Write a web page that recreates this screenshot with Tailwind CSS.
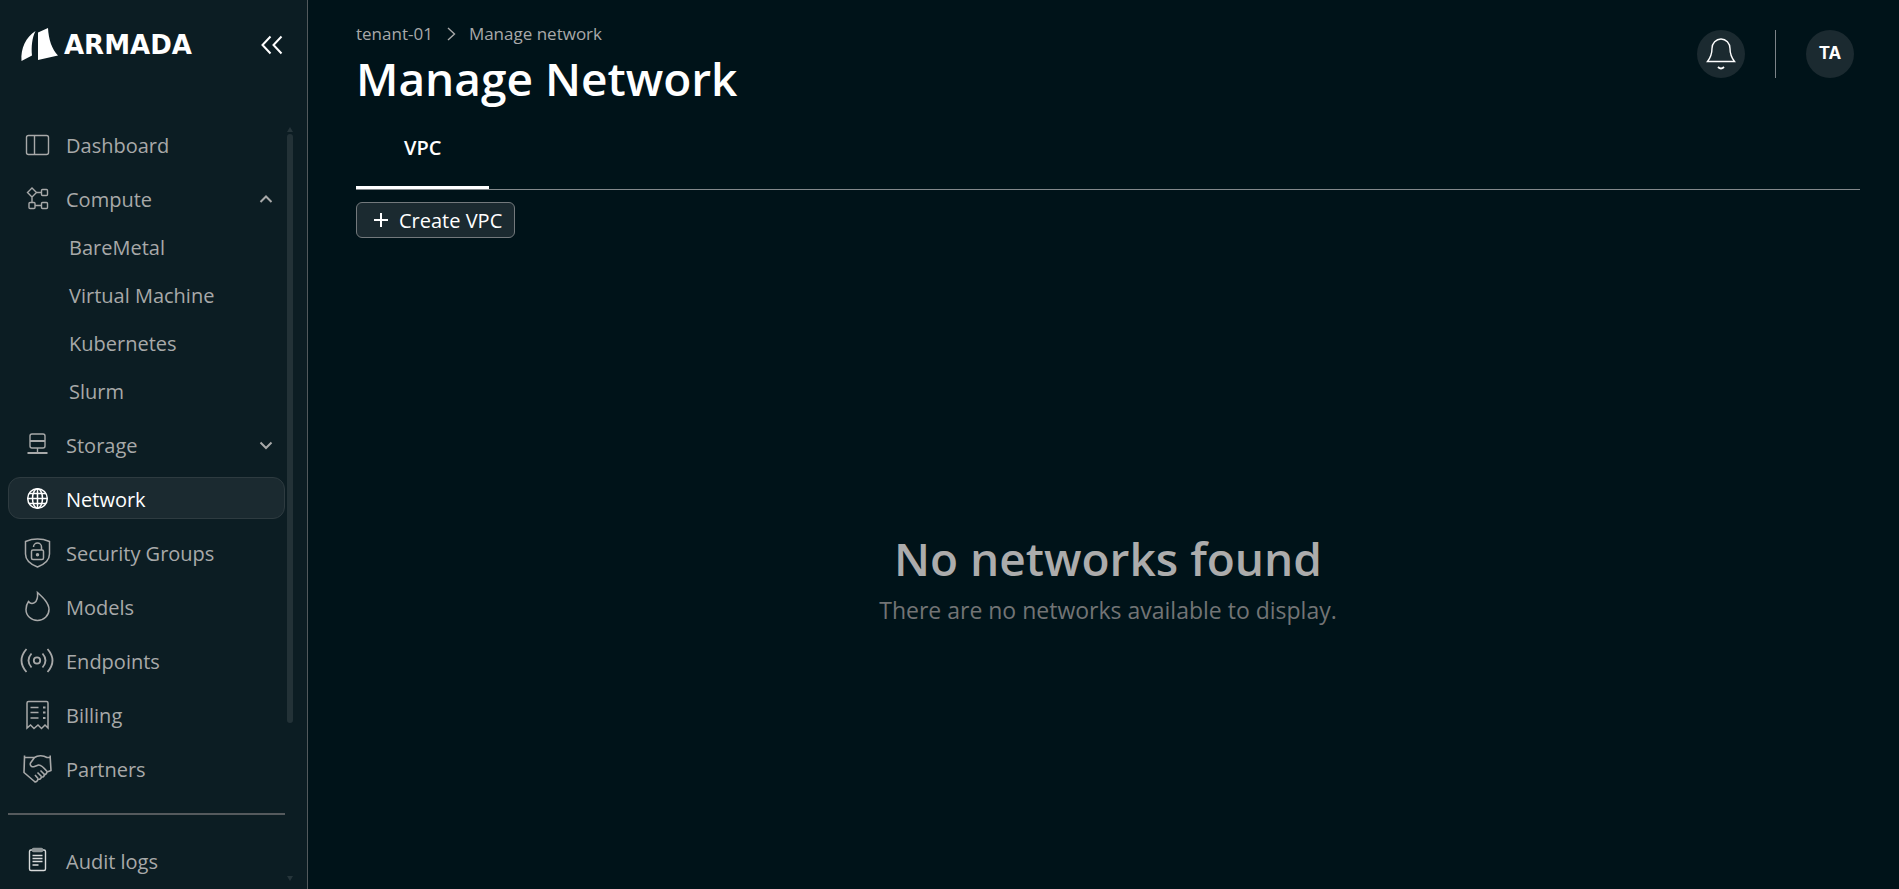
<!DOCTYPE html>
<html lang="en">
<head>
    <meta charset="UTF-8">
    <meta name="viewport" content="width=device-width, initial-scale=1.0">
    <title>Manage Network</title>
    <script src="https://cdn.jsdelivr.net/npm/@tailwindcss/browser@4"></script>
</head>
<body class="flex h-screen overflow-hidden bg-[#001319] font-['Segoe_UI','Open_Sans',sans-serif] text-white">

    <!-- Sidebar -->
    <aside class="relative flex h-full w-[308px] shrink-0 flex-col border-r border-[#52595c] bg-[#0c1d23]">
        <div class="flex items-center justify-between pt-7 pr-[23px] pl-5">
            <a href="#" class="flex items-center gap-1" aria-label="Armada home">
                <svg class="h-[34px] w-10" viewBox="0 0 40 34" fill="#fff">
                    <path d="M15.500 3C6 9 .5 20 1.500 33L12 27.500C11.200 19 12 10 15.500 3Z"/>
                    <path d="M18 4.500L28 0C28.500 11 32 21.500 38 27.500L18 32Z"/>
                </svg>
                <span class="font-['DejaVu_Sans'] text-[26px] leading-4 font-bold">ARMADA</span>
            </a>
            <button type="button" aria-label="Collapse sidebar">
                <svg class="size-6" viewBox="0 0 24 24" fill="none" stroke="#fff" stroke-width="2">
                    <path d="M10.500 3.500L2.500 12l8 8.500M21.500 3.500L13.500 12l8 8.500"/>
                </svg>
            </button>
        </div>

        <nav class="mt-[61px] flex flex-col gap-3 pr-[22px] pl-2 text-xl leading-7 text-[#a8a9a9]">
            <a href="#" class="flex h-[42px] items-center gap-3 rounded-xl px-3">
                <svg class="size-[34px]" viewBox="0 0 34 34" fill="none" stroke="currentColor" stroke-width="1.4">
                    <rect x="6.500" y="8.500" width="22" height="19" rx="2"/><path d="M14.500 8.500v19"/>
                </svg>
                <span class="pt-1">Dashboard</span>
            </a>
            <div class="flex flex-col gap-[6px]">
                <button type="button" class="flex h-[42px] items-center gap-3 rounded-xl px-3 text-left" aria-expanded="true">
                    <svg class="size-[34px]" viewBox="0 0 34 34" fill="none" stroke="currentColor" stroke-width="1.4">
                        <path d="M12 7l4.500 4.500L12 16l-4.500-4.500zM16.500 11.500h5M12 16v5.500M15 24.500h6.500"/>
                        <rect x="21.500" y="8.500" width="6" height="6" rx="1"/><rect x="9" y="21.500" width="6" height="6" rx="1"/><rect x="21.500" y="21.500" width="6" height="6" rx="1"/>
                    </svg>
                    <span class="flex-1 pt-1">Compute</span>
                    <svg class="size-4" viewBox="0 0 16 16" fill="none" stroke="currentColor" stroke-width="2"><path d="M3.500 12L9 6.500l5.500 5.500"/></svg>
                </button>
                <a href="#" class="flex h-[42px] items-center pt-1 pl-[61px]">BareMetal</a>
                <a href="#" class="flex h-[42px] items-center pt-1 pl-[61px]">Virtual Machine</a>
                <a href="#" class="flex h-[42px] items-center pt-1 pl-[61px]">Kubernetes</a>
                <a href="#" class="flex h-[42px] items-center pt-1 pl-[61px]">Slurm</a>
            </div>
            <button type="button" class="flex h-[42px] items-center gap-3 rounded-xl px-3 text-left" aria-expanded="false">
                <svg class="size-[34px]" viewBox="0 0 34 34" fill="none" stroke="currentColor" stroke-width="1.4">
                    <rect x="10" y="7" width="15" height="14" rx="2"/><path d="M17.500 21v6"/><path d="M10 14h15M7.500 26h20" stroke-width="1.800"/>
                </svg>
                <span class="flex-1 pt-1">Storage</span>
                <svg class="size-4" viewBox="0 0 16 16" fill="none" stroke="currentColor" stroke-width="2"><path d="M3.500 6.500L9 12l5.500-5.500"/></svg>
            </button>
            <a href="#" class="flex h-[42px] items-center gap-3 rounded-xl border border-[#2e3b40] bg-[#1b2a30] px-[11px] text-white" aria-current="page">
                <svg class="size-[34px]" viewBox="0 0 34 34" fill="none" stroke="currentColor" stroke-width="1.5">
                    <circle cx="17.500" cy="17.500" r="9.800"/><ellipse cx="17.500" cy="17.500" rx="5" ry="9.800"/>
                    <path d="M17.500 7.500v20M7.500 17.500h20M9 12.500h17M9 22.500h17"/>
                </svg>
                <span class="pt-1">Network</span>
            </a>
            <a href="#" class="flex h-[42px] items-center gap-3 rounded-xl px-3">
                <svg class="size-[34px]" viewBox="0 0 34 34" fill="none" stroke="currentColor" stroke-width="1.5">
                    <path d="M5.500 6.500C13 3.500 22 3.500 29.500 6.500V19c0 6-5.500 10.500-12 13-6.500-2.500-12-7-12-13z"/>
                    <rect x="11.500" y="15" width="12" height="9.500" rx="1.500"/><path d="M21.500 15v-3a4 4 0 0 0-8 0"/>
                    <circle cx="17.500" cy="19.800" r="1" fill="currentColor"/>
                </svg>
                <span class="pt-1">Security Groups</span>
            </a>
            <a href="#" class="flex h-[42px] items-center gap-3 rounded-xl px-3">
                <svg class="size-[34px]" viewBox="0 0 34 34" fill="none" stroke="currentColor" stroke-width="1.5">
                    <path d="M17.500 3.500C23 8.500 29 14 29 20.500a11.500 11 0 0 1-23 0C6 17 7 14.500 8.500 12.500c1.500 2 4 2.500 6 1.200C17 12 18 8.500 17.500 3.500z"/>
                </svg>
                <span class="pt-1">Models</span>
            </a>
            <a href="#" class="flex h-[42px] items-center gap-3 rounded-xl px-3">
                <svg class="size-[34px]" viewBox="0 0 34 34" fill="none" stroke="currentColor" stroke-width="1.8">
                    <circle cx="17" cy="17.500" r="3.200"/>
                    <path d="M11.500 10.500q-6 7 0 14M22.500 10.500q6 7 0 14M6.500 6q-10 11.500 0 23M27.500 6q10 11.500 0 23"/>
                </svg>
                <span class="pt-1">Endpoints</span>
            </a>
            <a href="#" class="flex h-[42px] items-center gap-3 rounded-xl px-3">
                <svg class="size-[34px]" viewBox="0 0 34 34" fill="none" stroke="currentColor" stroke-width="1.5">
                    <path d="M7 31V6q0-1.500 1.500-1.500h18Q28 4.500 28 6v25l-3-3-3.500 3.500L18 28l-4 3.500L10.500 28z"/>
                    <path d="M10.500 10.500h8M10.500 15.500h8M10.500 21h8"/><path d="M23 10.500h2.500M23 15.500h2.500M23 21h2.500" stroke-width="2.200"/>
                </svg>
                <span class="pt-1">Billing</span>
            </a>
            <a href="#" class="flex h-[42px] items-center gap-3 rounded-xl px-3">
                <svg class="size-[34px]" viewBox="0 0 34 34" fill="none" stroke="currentColor" stroke-width="1.6" stroke-linejoin="round">
                    <path d="M4.500 4.500v2L4 21.500 14.500 30.500q1.500 1 3-1l.5-1.500q2.500 1 3.500-2 2.500.5 3-2.500 2 0 2.500-2.500l4-1.500-.8-13v-2"/>
                    <path d="M4.500 6.500H15M31 6.500h-4C23 4 17.500 4.500 14.500 6.500L10.500 12c-1 2.500 1.500 4.500 4 3.500l4-1.500c3-.5 6.500 4 8.500 6.500M20.500 19.500l4 4M17.500 21.500l4 4M15 24l3 3.500"/>
                </svg>
                <span class="pt-1">Partners</span>
            </a>
            <hr class="my-3 border-t-2 border-[#555a5d]">
            <a href="#" class="flex h-[42px] items-center gap-3 rounded-xl px-3">
                <svg class="size-[34px]" viewBox="0 0 34 34" fill="none" stroke="#d8dada" stroke-width="1.4">
                    <rect x="9.500" y="7" width="16" height="20.500" rx="1.500"/>
                    <path d="M12.500 12.500h10M12.500 15.500h10M12.500 18.500h10M12.500 22h6"/>
                    <rect x="12.500" y="5.500" width="10" height="3" rx="1" fill="#8f9698" stroke="#8f9698"/>
                </svg>
                <span class="pt-1">Audit logs</span>
            </a>
        </nav>

        <!-- Scrollbar -->
        <div class="absolute top-[127px] right-[14px] bottom-[7px] flex w-[6px] flex-col">
            <svg class="h-[7px] w-[6px]" viewBox="0 0 6 7" fill="#26353a"><path d="M3 0l3 5H0z"/></svg>
            <div class="h-[589px] rounded-full bg-[#233237]"></div>
            <svg class="mt-auto h-[6px] w-[6px]" viewBox="0 0 6 6" fill="#26353a"><path d="M3 5L0 0h6z"/></svg>
        </div>
    </aside>

    <!-- Content -->
    <main class="flex min-w-0 flex-1 flex-col pr-[39px] pl-12">
        <header class="flex items-start justify-between">
            <div class="pt-[22px]">
                <div class="flex items-center gap-3 text-[17px] leading-6 text-[#a8a9a9]">
                    <a href="#">tenant-01</a>
                    <svg class="h-4 w-3" viewBox="0 0 12 16" fill="none" stroke="currentColor" stroke-width="1.4"><path d="M3 2l6.500 6L3 14"/></svg>
                    <a href="#">Manage network</a>
                </div>
                <h1 class="text-[46px] leading-16 font-semibold">Manage Network</h1>
            </div>
            <div class="flex items-center gap-[30px] pt-[30px] pr-[6px]">
                <button type="button" class="flex size-12 items-center justify-center rounded-full bg-[#1b2a30]" aria-label="Notifications">
                    <svg class="size-8" viewBox="0 0 32 32" fill="none" stroke="#fff" stroke-width="1.4">
                        <path d="M2.500 23.500C6 19 7 16 7 10.500a9 9.500 0 0 1 18 0c0 5.500 1 8.500 4.500 13z"/>
                        <path d="M13 29q3 3 6 0" stroke-width="1.800"/>
                    </svg>
                </button>
                <div class="h-12 w-px bg-[#7c8388]"></div>
                <button type="button" class="size-12 rounded-full bg-[#1b2a30] font-[Inter,sans-serif] text-[17px] font-bold">TA</button>
            </div>
        </header>

        <div class="mt-3 flex border-b border-[#83888b]" role="tablist">
            <button type="button" role="tab" aria-selected="true" class="h-[67px] border-b-3 border-white px-12 pb-3 text-xl leading-7 font-semibold">VPC</button>
        </div>

        <button type="button" class="mt-3 flex h-9 items-center gap-[6px] self-start rounded-md border border-[#73797c] bg-[#1b2a30] px-3 text-xl leading-7">
            <svg class="size-6" viewBox="0 0 24 24" fill="none" stroke="#fff" stroke-width="2"><path d="M12 5v14M5 12h14"/></svg>
            <span class="pt-[2px]">Create VPC</span>
        </button>

        <section class="flex flex-1 flex-col items-center justify-center pt-7 text-center">
            <h2 class="text-[46px] leading-16 font-semibold text-[#acacac]">No networks found</h2>
            <p class="text-[23px] leading-10 text-[#727475]">There are no networks available to display.</p>
        </section>
    </main>

</body>
</html>
